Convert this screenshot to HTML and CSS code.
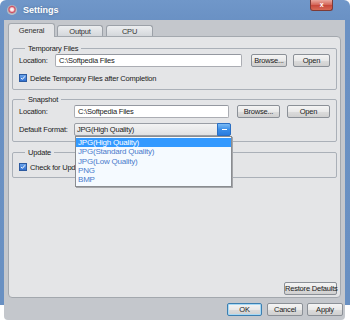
FILE: index.html
```html
<!DOCTYPE html>
<html lang="en">
<head>
  <meta charset="UTF-8" />
  <title>Settings</title>
  <link rel="stylesheet" href="styles.css">
</head>
<body>
  <div class="window">
    <div class="titlebar">
      <span class="app-icon"></span>
      <span class="title">Settings</span>
      <span class="close">x</span>
    </div>
    <div class="client">
      <div class="tabs">
        <div class="tab active">General</div>
        <div class="tab tab-output">Output</div>
        <div class="tab tab-cpu">CPU</div>
      </div>
      <div class="panel">
        <fieldset class="group group-temp">
          <legend>Temporary Files</legend>
          <div class="row">
            <span class="lbl lbl-temp">Location:</span>
            <div class="field">C:\Softpedia Files</div>
            <button class="btn btn-browse">Browse...</button>
            <button class="btn btn-open">Open</button>
          </div>
          <div class="check-row"><span class="check"><svg viewBox="0 0 8 8"><polyline points="1.5,4 3.2,5.8 6.5,1.8" /></svg></span>Delete Temporary Files after Completion</div>
        </fieldset>

        <fieldset class="group group-snap">
          <legend>Snapshot</legend>
          <div class="row">
            <span class="lbl lbl-snap">Location:</span>
            <div class="field">C:\Softpedia Files</div>
            <button class="btn btn-browse wide">Browse...</button>
            <button class="btn btn-open wide">Open</button>
          </div>
          <div class="row row-format">
            <span class="lbl lbl-snap">Default Format:</span>
            <div class="combo">
              <span class="combo-text">JPG(High Quality)</span>
              <span class="combo-arrow"><span></span></span>
              <ul class="dropdown">
                <li class="selected">JPG(High Quality)</li>
                <li>JPG(Standard Quality)</li>
                <li>JPG(Low Quality)</li>
                <li>PNG</li>
                <li>BMP</li>
              </ul>
            </div>
          </div>
        </fieldset>

        <fieldset class="group group-update">
          <legend>Update</legend>
          <div class="check-row"><span class="check"><svg viewBox="0 0 8 8"><polyline points="1.5,4 3.2,5.8 6.5,1.8" /></svg></span><span class="hidden-tail">Check for Updates</span></div>
        </fieldset>

        <div class="panel-foot">
          <button class="btn btn-restore">Restore Defaults</button>
        </div>
      </div>
      <div class="dialog-buttons">
        <button class="btn btn-ok">OK</button>
        <button class="btn btn-cancel">Cancel</button>
        <button class="btn btn-apply">Apply</button>
      </div>
    </div>
  </div>
</body>
</html>
```

FILE: styles.css
```css
* { box-sizing: border-box; }
body { margin: 0; background: #fff; font-family: "Liberation Sans", Arial, sans-serif; font-size: 7.5px; letter-spacing: -0.2px; color: #1b1b1b; }

.window { width: 350px; height: 323px; border-radius: 6px 6px 0 0; background: linear-gradient(to bottom, #7097c9 0, #6a91c4 20px, #6990c2 305px, #fff 305px); }

.titlebar { height: 20px; display: flex; align-items: center; padding-left: 7px; }
.app-icon { width: 10px; height: 10px; border-radius: 50%; margin-right: 6px; background: radial-gradient(circle at 50% 45%, #fff 0, #f7dde2 22%, #cf4a5f 40%, #b0b6be 58%, #eef0f3 100%); }
.title { color: #fff; font-weight: bold; font-size: 9px; letter-spacing: 0; text-shadow: 0 0 3px rgba(0,0,0,0.25); }
.close { margin-left: auto; margin-right: 17px; align-self: flex-start; width: 23px; height: 11px; border: 1px solid #7d3b37; border-top: none; border-radius: 0 0 3px 3px; background: linear-gradient(to bottom, #eaa99f, #d36355 50%, #c6463a 51%, #d86a55); color: #fff; font-size: 7px; font-weight: bold; text-align: center; line-height: 9px; }

.client { margin-left: 4px; width: 341px; height: 300px; background: #c4c7cc; border-radius: 0 0 4px 4px; display: flex; flex-direction: column; }

.tabs { height: 16px; display: flex; align-items: flex-end; padding-left: 4px; }
.tab { width: 46px; height: 11px; line-height: 11px; text-align: center; color: #333; border: 1px solid #9ca1a8; border-bottom: none; border-radius: 3px 3px 0 0; background: linear-gradient(to bottom, #eceef0, #d4d7db); }
.tab.active { width: 47px; height: 14px; line-height: 13px; margin-bottom: -1px; position: relative; z-index: 1; background: #e4e5e7; border-color: #a3a8ae; }
.tab-output { margin-left: 2px; }
.tab-cpu { margin-left: 3px; width: 47px; }

.panel { margin: 0 4px; height: 262px; border: 1px solid #a3a8ae; border-radius: 0 4px 4px 4px; background: #e4e5e7; padding: 7px 3px 2px; display: flex; flex-direction: column; }

.group { margin: 0; padding: 1px 6px 6px; border: 1px solid #aab0b8; border-radius: 2px; min-width: 0; }
.group legend { margin-left: 6px; padding: 0 3px; line-height: 9px; }
.group-snap { margin-top: 5px; padding-bottom: 5px; }
.group-update { margin-top: 6px; padding-top: 5px; padding-bottom: 5px; }

.row { display: flex; align-items: center; height: 13px; }
.row-format { margin-top: 5px; }
.lbl { flex: none; }
.lbl-temp { width: 36px; }
.lbl-snap { width: 55px; }

.field { flex: 1; height: 13px; background: #fff; border: 1px solid #abadb3; border-top-color: #9498a0; border-radius: 2px; padding-left: 3px; line-height: 11px; }

.btn { font-family: inherit; font-size: 7.5px; letter-spacing: -0.2px; white-space: nowrap; color: #1b1b1b; height: 13px; padding: 0; border: 1px solid #8b9097; border-radius: 2px; background: linear-gradient(to bottom, #f4f4f4, #e9e9e9 50%, #dcdcdc 51%, #d0d0d0); line-height: 11px; }
.btn-browse { width: 36px; margin-left: 9px; }
.btn-open { width: 37px; margin-left: 6px; }
.btn-browse.wide { width: 43px; margin-left: 8px; }
.btn-open.wide { width: 43px; margin-left: 7px; }

.check-row { display: flex; align-items: center; height: 10px; margin-top: 6px; }
.group-update .check-row { margin-top: 0; }
.hidden-tail { white-space: nowrap; }
.check { flex: none; width: 8px; height: 8px; margin-right: 3px; border: 1px solid #2c5aa0; background: linear-gradient(to bottom, #6aa3ea, #2f6fd0); display: flex; }
.check svg { width: 100%; height: 100%; }
.check polyline { fill: none; stroke: #fff; stroke-width: 1.3; }

.combo { position: relative; width: 157px; height: 13px; display: flex; border: 1px solid #9a9ea5; border-radius: 2px; background: linear-gradient(to bottom, #f3f3f3, #e1e2e4); }
.combo-text { padding-left: 2px; line-height: 11px; flex: 1; }
.combo-arrow { width: 14px; margin: -1px -1px -1px 0; border: 1px solid #2a6fc4; border-radius: 0 2px 2px 0; background: linear-gradient(to bottom, #7cbcf6, #3b8ee8 50%, #2a7ce0); display: flex; align-items: center; justify-content: center; }
.combo-arrow span { width: 5px; height: 1.5px; background: #fff; }

.dropdown { position: absolute; top: 12px; left: 0; width: 157px; margin: 0; padding: 1px 0 2px; list-style: none; background: #f5faff; border: 1px solid #8a8c90; box-shadow: 1px 1px 0 #a4a6aa; z-index: 2; font-size: 8px; }
.dropdown li { height: 9.3px; line-height: 9.3px; padding-left: 2px; color: #4a7bcb; }
.dropdown li.selected { background: #3399ff; color: #fff; }

.panel-foot { margin-top: auto; display: flex; justify-content: flex-end; }
.btn-restore { width: 53px; }

.dialog-buttons { display: flex; justify-content: flex-end; margin-top: 5px; padding-right: 2px; }
.btn-ok { width: 35px; border-color: #3c7fb1; box-shadow: inset 0 0 0 1px #a7d9f5; }
.btn-cancel { width: 36px; margin-left: 5px; }
.btn-apply { width: 36px; margin-left: 4px; }
```
